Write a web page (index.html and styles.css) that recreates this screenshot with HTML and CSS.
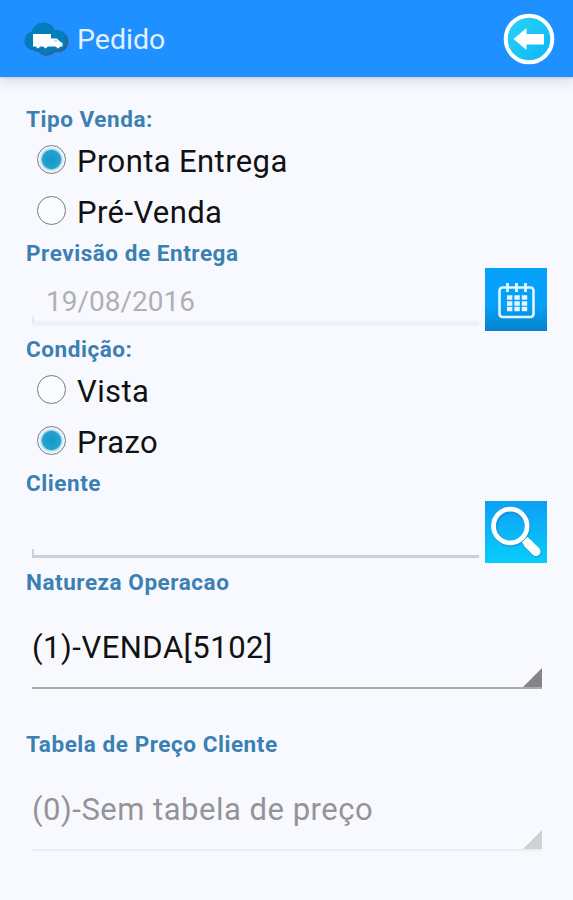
FILE: index.html
```
<!DOCTYPE html>
<html lang="pt-BR">
<head>
<meta charset="utf-8">
<title>Pedido</title>
<link rel="stylesheet" href="styles.css">
</head>

<body>

<div id="header">
	<svg class="logo" width="46" height="36" viewBox="0 0 46 36">
		<path d="M10 29C-1 28-1 12 9 11C11-1 29-1 31 9C40 8 47 15 45 23C43 31 37 32 32 31C27 36 19 36 16 31Q13 31 10 29Z" fill="#35618c"/>
		<path d="M9 28C-1 26 0 12 9 11C11-1 28-1 30 9C39 8 45 14 43 21C42 29 36 30 31 29C27 34 19 34 16 29Q12 30 9 28Z" fill="#047dbd"/>
		<path d="M10 13H28V17.5H34L37 20.5L39.5 22V25.5H37.5L35 27.5L32.5 25.5H25L22.5 27.5L20 25.5H17.5L15 27.5L12.5 25.5H10Z" fill="#fff"/>
		<path d="M31 18.8H33.5L35.3 20.6H31Z" fill="#c4d9e8"/>
	</svg>
	<div class="title"><span>Pedido</span></div>
	<svg class="back" width="52" height="52" viewBox="0 0 52 52">
		<defs>
			<linearGradient id="backfill" x1="0" y1="0" x2="1" y2="1">
				<stop offset="0" stop-color="#28d5fa"/>
				<stop offset="1" stop-color="#0eb4f5"/>
			</linearGradient>
		</defs>
		<circle cx="26" cy="26" r="23.3" fill="url(#backfill)" stroke="#fff" stroke-width="4"/>
		<path d="M10.5 26L23.5 15V21H41V31.5H23.5V37Z" fill="#fff"/>
	</svg>
</div>

<form id="pedido">

	<div class="label"><span>Tipo Venda:</span></div>
	<label class="option"><input type="radio" name="tipo" checked><span>Pronta Entrega</span></label>
	<label class="option"><input type="radio" name="tipo"><span>Pré-Venda</span></label>

	<div class="label previsao"><span>Previsão de Entrega</span></div>
	<div class="fieldrow">
		<div class="field disabled"><span>19/08/2016</span></div>
		<div class="btn calendar">
			<svg width="62" height="63" viewBox="0 0 62 63">
				<rect x="14.5" y="19.5" width="34" height="29.5" rx="3" fill="none" stroke="#e4f6ff" stroke-width="2.6"/>
				<path d="M22.5 15V24M31.5 15V24M40.5 15V24" stroke="#e4f6ff" stroke-width="2.8"/>
				<path d="M22 29.5H43M22 35.5H43M22 41H43" stroke="#e4f6ff" stroke-width="4.4" stroke-dasharray="5.4 2"/>
			</svg>
		</div>
	</div>

	<div class="label condicao"><span>Condição:</span></div>
	<label class="option"><input type="radio" name="condicao"><span>Vista</span></label>
	<label class="option"><input type="radio" name="condicao" checked><span>Prazo</span></label>

	<div class="label cliente"><span>Cliente</span></div>
	<div class="fieldrow clienterow">
		<div class="field"></div>
		<div class="btn search">
			<svg width="62" height="62" viewBox="0 0 62 62">
				<g fill="none" stroke="#1674aa" stroke-opacity=".35">
					<circle cx="26" cy="26" r="16.5" stroke-width="6.5"/>
					<path d="M43 43L51.5 51.5" stroke-width="10" stroke-linecap="round"/>
				</g>
				<g fill="none" stroke="#fff">
					<circle cx="25.3" cy="25" r="16.8" stroke-width="4.8"/>
					<path d="M43 42.5L51 50.5" stroke-width="9" stroke-linecap="round"/>
					<path d="M38 42.5L43.5 37" stroke-width="3"/>
				</g>
			</svg>
		</div>
	</div>

	<div class="label natureza"><span>Natureza Operacao</span></div>
	<div class="spinner"><span>(1)-VENDA[5102]</span></div>

	<div class="label tabela"><span>Tabela de Preço Cliente</span></div>
	<div class="spinner disabled"><span>(0)-Sem tabela de preço</span></div>

</form>

</body>
</html>
```
FILE: styles.css
```
body{
	margin: 0;
	height: 900px;
	overflow: hidden;
	background: #f8f9ff;
	font-family: Roboto, "Liberation Sans", sans-serif;
	color: #111;
}

#header{
	display: flex;
	align-items: center;
	box-sizing: border-box;
	height: 77px;
	padding: 0 18px 0 23px;
	background: #1e90ff;
	box-shadow: 0 1px 2px #c9cbd8, 0 5px 12px #dcdce4;
}

.title{
	flex: 1;
	margin-left: 8px;
	padding-top: 2px;
	font-size: 28.5px;
	color: #e3f0ff;
}

.logo{
	margin-top: 1px;
}

#pedido{
	padding: 27px 26px 0 26px;
}

.label{
	height: 30px;
	line-height: 30px;
	font-size: 22.5px;
	font-weight: 700;
	letter-spacing: .55px;
	color: #3a80b2;
	white-space: nowrap;
}

.previsao{
	margin-top: 2px;
}

.condicao{
	margin-top: 3px;
}

.cliente{
	margin-top: 2px;
}

.natureza{
	margin-top: 4px;
}

.tabela{
	margin-top: 40px;
}

.option{
	display: flex;
	align-items: center;
	height: 51px;
	font-size: 31px;
	letter-spacing: .4px;
	line-height: 51px;
}

.option span{
	padding-top: 3px;
}

.option input{
	appearance: none;
	flex: none;
	box-sizing: border-box;
	width: 29px;
	height: 29px;
	margin: 0 11px 0 11px;
	border: 1.5px solid #77797d;
	border-radius: 50%;
	background: #fbfcff;
}

.option input:checked{
	background: radial-gradient(circle, #1596c5 0, #26a3cf 9px, #bfe3f3 10.5px, #e3f4fc 12px, #f8f9ff 13px);
}

.fieldrow{
	display: flex;
	justify-content: space-between;
}

.clienterow{
	margin-top: 3px;
}

.field{
	box-sizing: border-box;
	width: 447px;
	height: 57px;
	margin-left: 6px;
	padding-left: 14px;
	border-bottom: 3px solid #cfd0d5;
	font-size: 28px;
	line-height: 68px;
}

/* short tick on the left end of the underline */
.field::before{
	content: "";
	float: left;
	width: 2px;
	height: 6px;
	margin: 48px 0 0 -14px;
	background: #d3d4d9;
}

.field.disabled{
	border-bottom: 5px solid #f0f1f6;
	height: 58px;
	color: #b0b0b3;
}

.field.disabled::before{
	margin-right: 12px;
	background: #e9eaef;
}

.btn{
	width: 62px;
	height: 63px;
}

.btn svg{
	display: block;
}

.calendar{
	background: linear-gradient(#05a2fc 0, #05a0f8 60%, #0782cd 100%);
}

.search{
	height: 62px;
	background: linear-gradient(#0d9ff5, #08cdfa);
}

.spinner{
	display: flex;
	align-items: center;
	justify-content: space-between;
	box-sizing: border-box;
	height: 92px;
	margin: 0 5px 0 6px;
	padding-top: 10px;
	border-bottom: 2px solid #aaabaf;
	font-size: 31px;
	letter-spacing: .5px;
}

.spinner::after{
	content: "";
	align-self: flex-end;
	width: 19px;
	height: 19px;
	background: #858587;
	clip-path: polygon(100% 0, 100% 100%, 0 100%);
}

.spinner.disabled{
	border-color: #ecedf2;
	color: #949498;
}

.spinner.disabled::after{
	background: #d0d1d5;
}
```
